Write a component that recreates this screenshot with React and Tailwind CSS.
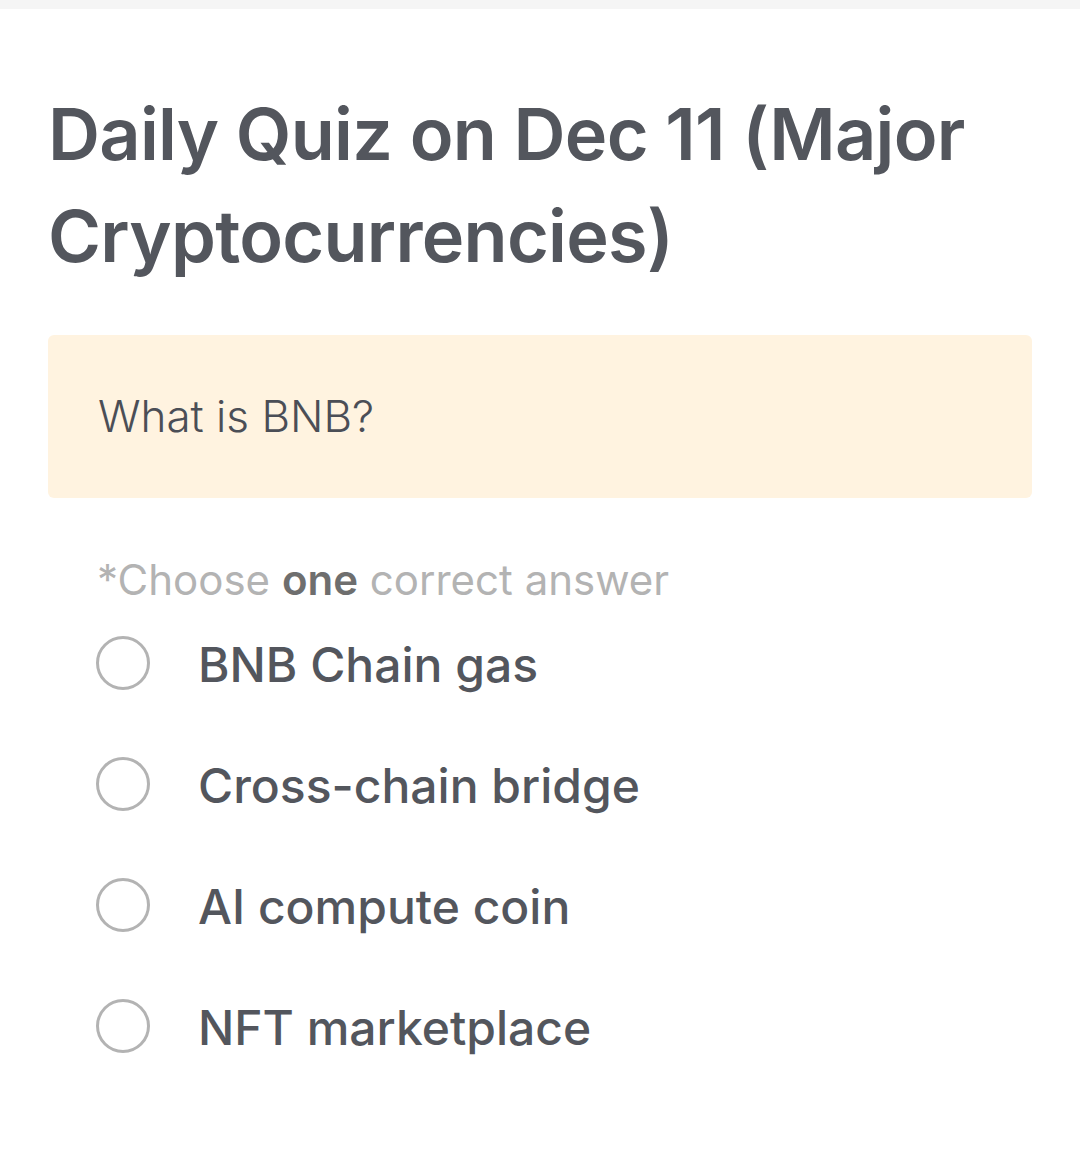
const options = ['BNB Chain gas', 'Cross-chain bridge', 'AI compute coin', 'NFT marketplace'];

export default function App() {
  return (
    <div className="min-h-screen bg-white font-['Inter',sans-serif]">
      {/* top strip */}
      <div className="h-[9px] bg-[#f5f5f5]" />

      <div className="px-[48px]">
        <h1 className="mt-[74px] text-[72px] leading-[102px] font-semibold tracking-[-0.01em] text-[#53565d]">
          Daily Quiz on Dec 11 (Major Cryptocurrencies)
        </h1>

        <div className="mt-[48px] rounded-md bg-[#fff3e0] px-[50px] py-[56px]">
          <p className="text-[44px] leading-[51px] font-light text-[#4b4e56]">What is BNB?</p>
        </div>

        <p className="mt-[57px] pl-[49px] text-[42px] leading-[50px] text-[#b3b3b3]">
          *Choose <span className="font-semibold text-[#6e6e6e]">one</span> correct answer
        </p>

        <div className="mt-[28px] flex flex-col gap-[61px] pl-[48px]">
          {options.map((opt) => (
            <label key={opt} className="flex h-[60px] items-center gap-[48px]">
              <span className="h-[54px] w-[54px] shrink-0 rounded-full border-[3px] border-[#b3b3b3]" />
              <span className="pt-[4px] text-[48px] font-medium text-[#53565d]">{opt}</span>
            </label>
          ))}
        </div>
      </div>
    </div>
  );
}
